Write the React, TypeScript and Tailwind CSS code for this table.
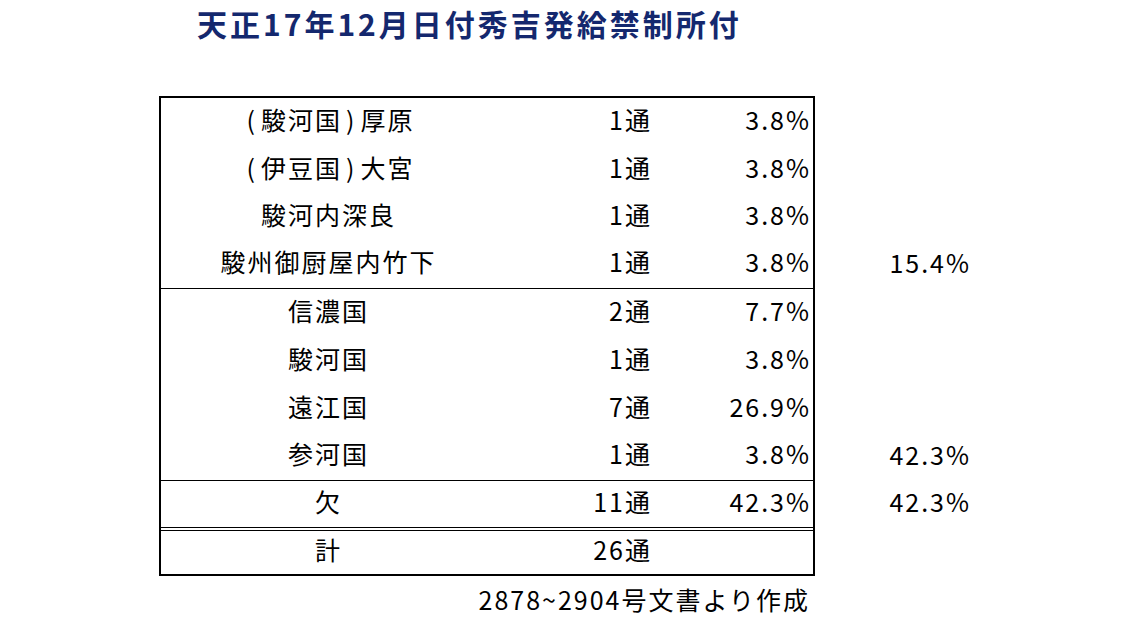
import React from "react";

const font = { fontFamily: '"Noto Sans CJK JP", "Noto Sans", sans-serif' };

type Row = { name: React.ReactNode; count: string; pct: string; side?: string };

const P = ({ c }: { c: string }) => <span className="mx-[4px]">{c}</span>;

const group1: Row[] = [
  { name: <><P c="(" />駿河国<P c=")" />厚原</>, count: "1通", pct: "3.8%" },
  { name: <><P c="(" />伊豆国<P c=")" />大宮</>, count: "1通", pct: "3.8%" },
  { name: "駿河内深良", count: "1通", pct: "3.8%" },
  { name: "駿州御厨屋内竹下", count: "1通", pct: "3.8%", side: "15.4%" },
];
const group2: Row[] = [
  { name: "信濃国", count: "2通", pct: "7.7%" },
  { name: "駿河国", count: "1通", pct: "3.8%" },
  { name: "遠江国", count: "7通", pct: "26.9%" },
  { name: "参河国", count: "1通", pct: "3.8%", side: "42.3%" },
];

function TRow({ r, h }: { r: Row; h: string }) {
  return (
    <div className={`grid grid-cols-[335px_156px_1fr] items-center pb-[6px] ${h}`}>
      <div className="text-center">{r.name}</div>
      <div className="text-right">{r.count}</div>
      <div className="text-right pr-[2px]">{r.pct}</div>
    </div>
  );
}

function SideCell({ text, h }: { text?: string; h: string }) {
  return <div className={`flex items-center justify-end pb-[6px] ${h}`}>{text ?? ""}</div>;
}

export default function App() {
  return (
    <div
      className="w-[1136px] h-[625px] bg-white text-black overflow-hidden text-[25px] tracking-[2px] leading-none"
      style={font}
    >
      <div className="h-[50px] flex items-center pl-[197px] pb-[4px]">
        <h1 className="text-[30px] font-bold tracking-[3px] text-[#14286e]">
          天正17年12月日付秀吉発給禁制所付
        </h1>
      </div>
      <div className="mt-[46px] ml-[159px] flex">
        <div className="w-[656px] border-2 border-black flex flex-col">
          <div className="flex flex-col border-b border-black">
            {group1.map((r, i) => (
              <TRow key={i} r={r} h={i < 2 ? "h-[48px]" : "h-[47px]"} />
            ))}
          </div>
          <div className="flex flex-col border-b border-black">
            {group2.map((r, i) => (
              <TRow key={i} r={r} h={i < 3 ? "h-[48px]" : "h-[47px]"} />
            ))}
          </div>
          <TRow r={{ name: "欠", count: "11通", pct: "42.3%" }} h="h-[46px]" />
          <div className="h-[4px] border-y border-black" />
          <TRow r={{ name: "計", count: "26通", pct: "" }} h="h-[43px]" />
        </div>
        <div className="w-[156px] pt-[2px] flex flex-col">
          <SideCell h="h-[48px]" />
          <SideCell h="h-[48px]" />
          <SideCell h="h-[47px]" />
          <SideCell h="h-[48px]" text="15.4%" />
          <SideCell h="h-[48px]" />
          <SideCell h="h-[48px]" />
          <SideCell h="h-[48px]" />
          <SideCell h="h-[48px]" text="42.3%" />
          <SideCell h="h-[46px]" text="42.3%" />
        </div>
      </div>
      <div className="w-[810px] text-right mt-[11px]">2878~2904号文書より作成</div>
    </div>
  );
}
